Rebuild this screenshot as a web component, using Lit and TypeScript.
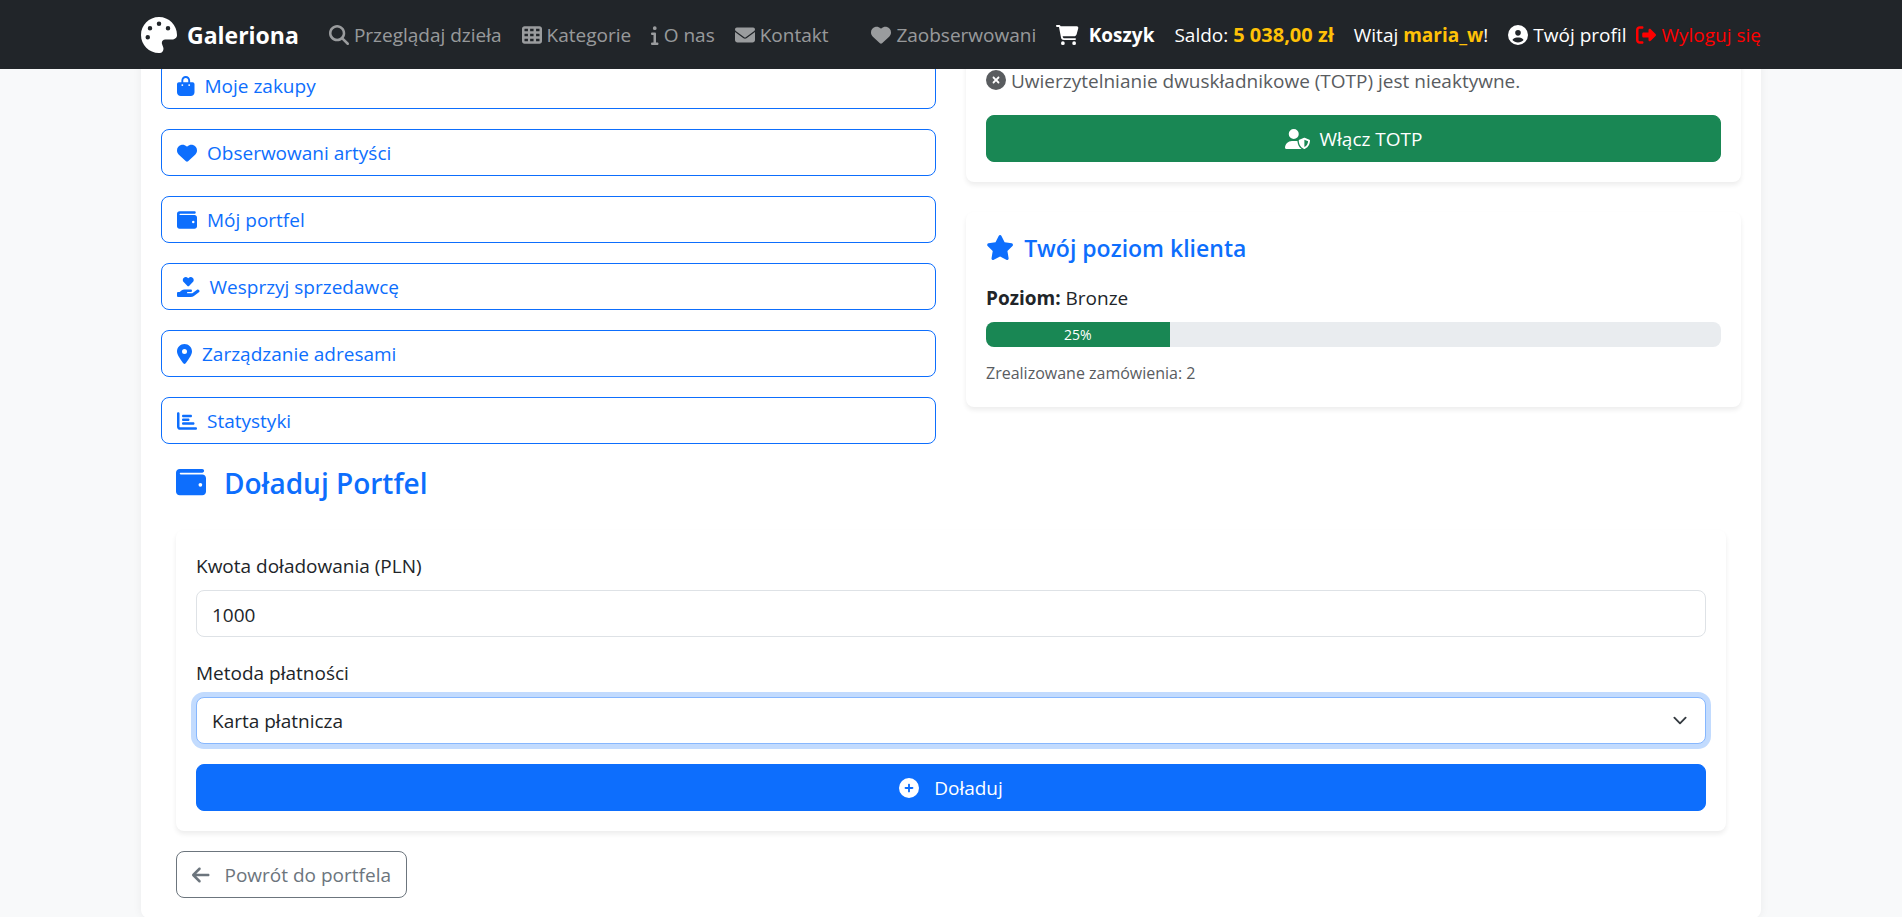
import { LitElement, html, css, svg } from "lit";
import { customElement, property, state } from "lit/decorators.js";

/** Solid icon set: name -> [viewBox width, path]; every glyph is 512 units high. */
const ICONS: Record<string, [number, string]> = {
  palette: [512, "M512 256c0 .9 0 1.8 0 2.7c-.4 36.5-33.6 61.3-70.1 61.3L344 320c-26.5 0-48 21.5-48 48c0 3.4 .4 6.7 1 9.9c2.1 10.2 6.5 20 10.8 29.9c6.1 13.8 12.1 27.5 12.1 42c0 31.8-21.6 60.7-53.4 62c-3.5 .1-7 .2-10.6 .2C114.6 512 0 397.4 0 256S114.6 0 256 0S512 114.6 512 256zM128 288a32 32 0 1 0 -64 0 32 32 0 1 0 64 0zm0-96a32 32 0 1 0 0-64 32 32 0 1 0 0 64zM288 96a32 32 0 1 0 -64 0 32 32 0 1 0 64 0zm96 96a32 32 0 1 0 0-64 32 32 0 1 0 0 64z"],
  search: [512, "M416 208c0 45.9-14.9 88.3-40 122.7L502.6 457.4c12.5 12.5 12.5 32.8 0 45.3s-32.8 12.5-45.3 0L330.7 376c-34.4 25.2-76.8 40-122.7 40C93.1 416 0 322.9 0 208S93.1 0 208 0S416 93.1 416 208zM208 352a144 144 0 1 0 0-288 144 144 0 1 0 0 288z"],
  grid: [512, "M64 32C28.7 32 0 60.7 0 96V416c0 35.3 28.7 64 64 64H448c35.3 0 64-28.7 64-64V96c0-35.3-28.7-64-64-64H64zm88 64v64H64V96h88zm56 0h88v64H208V96zm240 0v64H360V96h88zM64 224h88v64H64V224zm232 0v64H208V224h88zm64 0h88v64H360V224zM152 352v64H64V352h88zm56 0h88v64H208V352zm240 0v64H360V352h88z"],
  info: [192, "M48 80a48 48 0 1 1 96 0A48 48 0 1 1 48 80zM0 224c0-17.7 14.3-32 32-32H96c17.7 0 32 14.3 32 32V448h32c17.7 0 32 14.3 32 32s-14.3 32-32 32H32c-17.7 0-32-14.3-32-32s14.3-32 32-32H64V256H32c-17.7 0-32-14.3-32-32z"],
  envelope: [512, "M48 64C21.5 64 0 85.5 0 112c0 15.1 7.1 29.3 19.2 38.4L236.8 313.6c11.4 8.5 27 8.5 38.4 0L492.8 150.4c12.1-9.1 19.2-23.3 19.2-38.4c0-26.5-21.5-48-48-48H48zM0 176V384c0 35.3 28.7 64 64 64H448c35.3 0 64-28.7 64-64V176L294.4 339.2c-22.8 17.1-54 17.1-76.8 0L0 176z"],
  heart: [512, "M47.6 300.4L228.3 469.1c7.5 7 17.4 10.9 27.7 10.9s20.2-3.9 27.7-10.9L464.4 300.4c30.4-28.3 47.6-68 47.6-109.5v-5.8c0-69.9-50.5-129.5-119.4-141C347 36.5 300.6 51.4 268 84L256 96 244 84c-32.6-32.6-79-47.5-124.6-39.9C50.5 55.6 0 115.2 0 185.1v5.8c0 41.5 17.2 81.2 47.6 109.5z"],
  cart: [576, "M0 24C0 10.7 10.7 0 24 0H69.5c22 0 41.5 12.8 50.6 32h411c26.3 0 45.5 25 38.6 50.4l-41 152.3c-8.5 31.4-37 53.3-69.5 53.3H170.7l5.4 28.5c2.2 11.3 12.1 19.5 23.6 19.5H488c13.3 0 24 10.7 24 24s-10.7 24-24 24H199.7c-34.6 0-64.3-24.6-70.7-58.5L77.4 54.5c-.7-3.8-4-6.5-7.9-6.5H24C10.7 48 0 37.3 0 24zM128 464a48 48 0 1 1 96 0 48 48 0 1 1 -96 0zm336-48a48 48 0 1 1 0 96 48 48 0 1 1 0-96z"],
  user: [512, "M399 384.2C376.9 345.8 335.4 320 288 320H224c-47.4 0-88.9 25.8-111 64.2c35.2 39.2 86.2 63.8 143 63.8s107.8-24.7 143-63.8zM0 256a256 256 0 1 1 512 0A256 256 0 1 1 0 256zm256 16a72 72 0 1 0 0-144 72 72 0 1 0 0 144z"],
  logout: [512, "M377.9 105.9L500.7 228.7c7.2 7.2 11.3 17.1 11.3 27.3s-4.1 20.1-11.3 27.3L377.9 406.1c-6.4 6.4-15 9.9-24 9.9c-18.7 0-33.9-15.2-33.9-33.9l0-62.1-128 0c-17.7 0-32-14.3-32-32l0-64c0-17.7 14.3-32 32-32l128 0 0-62.1c0-18.7 15.2-33.9 33.9-33.9c9 0 17.6 3.6 24 9.9zM160 96L96 96c-17.7 0-32 14.3-32 32l0 256c0 17.7 14.3 32 32 32l64 0c17.7 0 32 14.3 32 32s-14.3 32-32 32l-64 0c-53 0-96-43-96-96L0 128C0 75 43 32 96 32l64 0c17.7 0 32 14.3 32 32s-14.3 32-32 32z"],
  bag: [448, "M160 112c0-35.3 28.7-64 64-64s64 28.7 64 64v48H160V112zm-48 48H48c-26.5 0-48 21.5-48 48V416c0 53 43 96 96 96H352c53 0 96-43 96-96V208c0-26.5-21.5-48-48-48H336V112C336 50.1 285.9 0 224 0S112 50.1 112 112v48zm24 48a24 24 0 1 1 0 48 24 24 0 1 1 0-48zm152 24a24 24 0 1 1 48 0 24 24 0 1 1 -48 0z"],
  wallet: [512, "M64 32C28.7 32 0 60.7 0 96V416c0 35.3 28.7 64 64 64H448c35.3 0 64-28.7 64-64V192c0-35.3-28.7-64-64-64H80c-8.8 0-16-7.2-16-16s7.2-16 16-16H448c17.7 0 32-14.3 32-32s-14.3-32-32-32H64zM416 272a32 32 0 1 1 0 64 32 32 0 1 1 0-64z"],
  donate: [576, "M148 76.6C148 34.3 182.3 0 224.6 0c20.3 0 39.8 8.1 54.1 22.4l9.3 9.3 9.3-9.3C311.6 8.1 331.1 0 351.4 0C393.7 0 428 34.3 428 76.6c0 20.3-8.1 39.8-22.4 54.1L302.1 234.1c-7.8 7.8-20.5 7.8-28.3 0L170.4 130.7C156.1 116.4 148 96.9 148 76.6zM568.2 336.3c13.1 17.8 9.3 42.8-8.5 55.9L433.1 485.5c-23.4 17.2-51.6 26.5-80.7 26.5H192 32c-17.7 0-32-14.3-32-32V416c0-17.7 14.3-32 32-32H68.8l44.9-36c22.7-18.2 50.9-28 80-28H272h16 64c17.7 0 32 14.3 32 32s-14.3 32-32 32H288 272c-8.8 0-16 7.2-16 16s7.2 16 16 16H392.6l119.7-88.2c17.8-13.1 42.8-9.3 55.9 8.5z"],
  pin: [384, "M215.7 499.2C267 435 384 279.4 384 192C384 86 298 0 192 0S0 86 0 192c0 87.4 117 243 168.3 307.2c12.3 15.3 35.1 15.3 47.4 0zM192 128a64 64 0 1 1 0 128 64 64 0 1 1 0-128z"],
  chart: [512, "M32 32c17.7 0 32 14.3 32 32V400c0 8.8 7.2 16 16 16H480c17.7 0 32 14.3 32 32s-14.3 32-32 32H80c-44.2 0-80-35.8-80-80V64C0 46.3 14.3 32 32 32zm96 96c0-17.7 14.3-32 32-32l192 0c17.7 0 32 14.3 32 32s-14.3 32-32 32l-192 0c-17.7 0-32-14.3-32-32zm32 64H288c17.7 0 32 14.3 32 32s-14.3 32-32 32H160c-17.7 0-32-14.3-32-32s14.3-32 32-32zm0 96H416c17.7 0 32 14.3 32 32s-14.3 32-32 32H160c-17.7 0-32-14.3-32-32s14.3-32 32-32z"],
  xmark: [512, "M256 512A256 256 0 1 0 256 0a256 256 0 1 0 0 512zM175 175c9.4-9.4 24.6-9.4 33.9 0l47 47 47-47c9.4-9.4 24.6-9.4 33.9 0s9.4 24.6 0 33.9l-47 47 47 47c9.4 9.4 9.4 24.6 0 33.9s-24.6 9.4-33.9 0l-47-47-47 47c-9.4 9.4-24.6 9.4-33.9 0s-9.4-24.6 0-33.9l47-47-47-47c-9.4-9.4-9.4-24.6 0-33.9z"],
  shield: [640, "M224 256A128 128 0 1 0 224 0a128 128 0 1 0 0 256zm-45.7 48C79.8 304 0 383.8 0 482.3C0 498.7 13.3 512 29.7 512H418.3c1.8 0 3.5-.2 5.3-.5c-76.3-55.1-99.8-141-103.1-200.2c-16.1-4.8-33.1-7.3-50.7-7.3H178.3zm308.8-78.3l-120 48C358 277.4 352 286.2 352 296c0 63.3 25.9 168.8 134.8 214.2c5.9 2.5 12.6 2.5 18.5 0C614.1 464.8 640 359.3 640 296c0-9.8-6-18.6-15.1-22.3l-120-48c-5.7-2.3-12.1-2.3-17.8 0zM591.4 312c-3.9 50.7-27.2 116.7-95.4 149.7V273.8L591.4 312z"],
  star: [576, "M316.9 18C311.6 7 300.4 0 288.1 0s-23.4 7-28.8 18L195 150.3 51.4 171.5c-12 1.8-22 10.2-25.7 21.7s-.7 24.2 7.9 32.7L137.8 329 113.2 474.7c-2 12 3 24.2 12.9 31.3s23 8 33.8 2.3l128.3-68.5 128.3 68.5c10.8 5.7 23.9 4.9 33.8-2.3s14.9-19.3 12.9-31.3L438.5 329 542.7 225.9c8.6-8.5 11.7-21.2 7.9-32.7s-13.7-19.9-25.7-21.7L381.2 150.3 316.9 18z"],
  plus: [512, "M256 512A256 256 0 1 0 256 0a256 256 0 1 0 0 512zM232 344V280H168c-13.3 0-24-10.7-24-24s10.7-24 24-24h64V168c0-13.3 10.7-24 24-24s24 10.7 24 24v64h64c13.3 0 24 10.7 24 24s-10.7 24-24 24H280v64c0 13.3-10.7 24-24 24s-24-10.7-24-24z"],
  back: [448, "M9.4 233.4c-12.5 12.5-12.5 32.8 0 45.3l160 160c12.5 12.5 32.8 12.5 45.3 0s12.5-32.8 0-45.3L109.2 288 416 288c17.7 0 32-14.3 32-32s-14.3-32-32-32l-306.7 0L214.6 118.6c12.5-12.5 12.5-32.8 0-45.3s-32.8-12.5-45.3 0l-160 160z"],
};

@customElement("fa-icon")
export class FaIcon extends LitElement {
  static styles = css`
    :host { display: inline-flex; flex: none; height: 20px; }
    svg { display: block; height: 100%; width: auto; fill: currentColor; }
  `;
  @property() name = "heart";
  render() {
    const [w, d] = ICONS[this.name];
    return html`<svg viewBox="0 0 ${w} 512" aria-hidden="true">${svg`<path d=${d}></path>`}</svg>`;
  }
}

@customElement("site-nav")
export class SiteNav extends LitElement {
  static styles = css`
    :host { display: block; background: #212529; color: #fff; position: relative; z-index: 1; }
    .bar { display: flex; align-items: center; max-width: 1620px; min-height: 69px; margin: 0 auto; }
    .group { display: flex; align-items: center; gap: 20px; }
    .right { margin-left: auto; }
    .pair { display: flex; align-items: center; gap: 10px; }
    a { display: inline-flex; align-items: center; gap: 5px; color: rgba(255, 255, 255, 0.55); text-decoration: none; white-space: nowrap; }
    .brand { gap: 10px; margin-right: 30px; color: #fff; font-size: 23px; font-weight: 700; }
    .brand fa-icon { height: 36px; }
    .light { color: #fff; }
    .cart { gap: 10px; color: #fff; font-weight: 700; }
    .out { color: #f00; }
    .text { white-space: nowrap; }
    strong { color: #ffc107; }
    .amount { font-size: 20px; }
  `;
  render() {
    return html`<nav class="bar">
      <a class="brand" href="#"><fa-icon name="palette"></fa-icon>Galeriona</a>
      <div class="group">
        <a href="#"><fa-icon name="search"></fa-icon>Przeglądaj dzieła</a>
        <a href="#"><fa-icon name="grid"></fa-icon>Kategorie</a>
        <a href="#"><fa-icon name="info"></fa-icon>O nas</a>
        <a href="#"><fa-icon name="envelope"></fa-icon>Kontakt</a>
      </div>
      <div class="group right">
        <a href="#"><fa-icon name="heart"></fa-icon>Zaobserwowani</a>
        <a class="cart" href="#"><fa-icon name="cart"></fa-icon>Koszyk</a>
        <span class="text">Saldo: <strong class="amount">5 038,00 zł</strong></span>
        <span class="text">Witaj <strong>maria_w</strong>!</span>
        <div class="pair">
          <a class="light" href="#"><fa-icon name="user"></fa-icon>Twój profil</a>
          <a class="out" href="#"><fa-icon name="logout"></fa-icon>Wyloguj się</a>
        </div>
      </div>
    </nav>`;
  }
}

@customElement("app-root")
export class AppRoot extends LitElement {
  static styles = css`
    :host {
      display: flex; flex-direction: column; height: 100vh;
      background: #f8f9fa; color: #212529;
      font-family: "Open Sans", "Noto Sans", sans-serif; font-size: 19px; line-height: 30px;
    }
    * { box-sizing: border-box; }
    main { flex: 1; min-height: 0; overflow: auto; scrollbar-width: none; line-height: 32px; }
    h2, h3, p { margin: 0; }
    .sheet {
      max-width: 1620px; margin: -24px auto 0; padding: 0 20px 20px;
      background: #fff; border-radius: 8px; box-shadow: 0 0 10px rgba(0, 0, 0, 0.06);
    }
    .columns { display: grid; grid-template-columns: 1fr 1fr; gap: 30px; }
    .links { display: flex; flex-direction: column; gap: 20px; padding-top: 17px; }
    .side { display: flex; flex-direction: column; gap: 30px; }
    .card { padding: 20px; background: #fff; border-radius: 8px; box-shadow: 0 3px 5px rgba(0, 0, 0, 0.075); }
    main fa-icon { margin-bottom: 2px; }
    .btn {
      display: flex; align-items: center; justify-content: center; gap: 10px; width: 100%;
      padding: 9px 15px 7px; border: 1px solid transparent; border-radius: 8px;
      font: inherit; line-height: 29px; text-decoration: none; color: #fff; cursor: pointer;
    }
    .outline { justify-content: flex-start; color: #0d6efd; border-color: #0d6efd; }
    .success { background: #198754; border-color: #198754; }
    .primary { background: #0d6efd; border-color: #0d6efd; gap: 15px; }
    .secondary { display: inline-flex; width: auto; margin-top: 20px; gap: 15px; color: #6c757d; border-color: #6c757d; vertical-align: top; }
    .status { display: flex; align-items: center; gap: 5px; margin-bottom: 18px; color: #595c5f; }
    .level { display: flex; align-items: center; gap: 10px; margin-bottom: 18px; color: #0d6efd; font-size: 23px; font-weight: 600; }
    .level fa-icon { height: 25px; }
    .progress { display: flex; height: 25px; margin: 8px 0 12px; overflow: hidden; background: #e9ecef; border-radius: 8px; }
    .fill { background: #198754; color: #fff; font-size: 14px; line-height: 25px; text-align: center; }
    .small { color: #595c5f; font-size: 16px; line-height: 28px; }
    .wallet { padding: 20px 15px 0; }
    .title { display: flex; align-items: center; gap: 18px; margin-bottom: 28px; color: #0d6efd; font-size: 28px; font-weight: 600; line-height: 38px; }
    .title fa-icon { height: 30px; }
    label { display: block; margin-bottom: 8px; }
    .field {
      display: block; width: 100%; height: 47px; margin-bottom: 20px; padding: 9px 15px 7px;
      border: 1px solid #dee2e6; border-radius: 8px; background: #fff; color: #212529;
      font: inherit; line-height: 29px; outline: 0; appearance: none;
    }
    select.field {
      background: #fff url("data:image/svg+xml,%3csvg xmlns='http://www.w3.org/2000/svg' viewBox='0 0 16 16'%3e%3cpath fill='none' stroke='%23343a40' stroke-linecap='round' stroke-linejoin='round' stroke-width='2' d='m2 5 6 6 6-6'/%3e%3c/svg%3e") no-repeat right 15px center / 20px 15px;
    }
    .field.active, .field:focus { border-color: #86b7fe; box-shadow: 0 0 0 5px rgba(13, 110, 253, 0.25); }
  `;

  @state() private progress = 25;

  private links: [string, string][] = [
    ["bag", "Moje zakupy"],
    ["heart", "Obserwowani artyści"],
    ["wallet", "Mój portfel"],
    ["donate", "Wesprzyj sprzedawcę"],
    ["pin", "Zarządzanie adresami"],
    ["chart", "Statystyki"],
  ];

  render() {
    return html`
      <site-nav></site-nav>
      <main>
        <div class="sheet">
          <div class="columns">
            <div class="links">
              ${this.links.map(([icon, label]) => html`<a class="btn outline" href="#"><fa-icon name=${icon}></fa-icon>${label}</a>`)}
            </div>
            <div class="side">
              <section class="card">
                <p class="status"><fa-icon name="xmark"></fa-icon>Uwierzytelnianie dwuskładnikowe (TOTP) jest nieaktywne.</p>
                <a class="btn success" href="#"><fa-icon name="shield"></fa-icon>Włącz TOTP</a>
              </section>
              <section class="card">
                <h3 class="level"><fa-icon name="star"></fa-icon>Twój poziom klienta</h3>
                <p><strong>Poziom:</strong> Bronze</p>
                <div class="progress" role="progressbar" aria-label="Poziom" aria-valuenow=${this.progress} aria-valuemin="0" aria-valuemax="100">
                  <div class="fill" style="width:${this.progress}%">${this.progress}%</div>
                </div>
                <p class="small">Zrealizowane zamówienia: 2</p>
              </section>
            </div>
          </div>
          <div class="wallet">
            <h2 class="title"><fa-icon name="wallet"></fa-icon>Doładuj Portfel</h2>
            <form class="card" @submit=${(e: Event) => e.preventDefault()}>
              <label for="amount">Kwota doładowania (PLN)</label>
              <input class="field" id="amount" type="text" inputmode="numeric" value="1000" />
              <label for="method">Metoda płatności</label>
              <select class="field active" id="method">
                <option>Karta płatnicza</option>
              </select>
              <button class="btn primary" type="submit"><fa-icon name="plus"></fa-icon>Doładuj</button>
            </form>
            <a class="btn secondary" href="#"><fa-icon name="back"></fa-icon>Powrót do portfela</a>
          </div>
        </div>
      </main>
    `;
  }
}
